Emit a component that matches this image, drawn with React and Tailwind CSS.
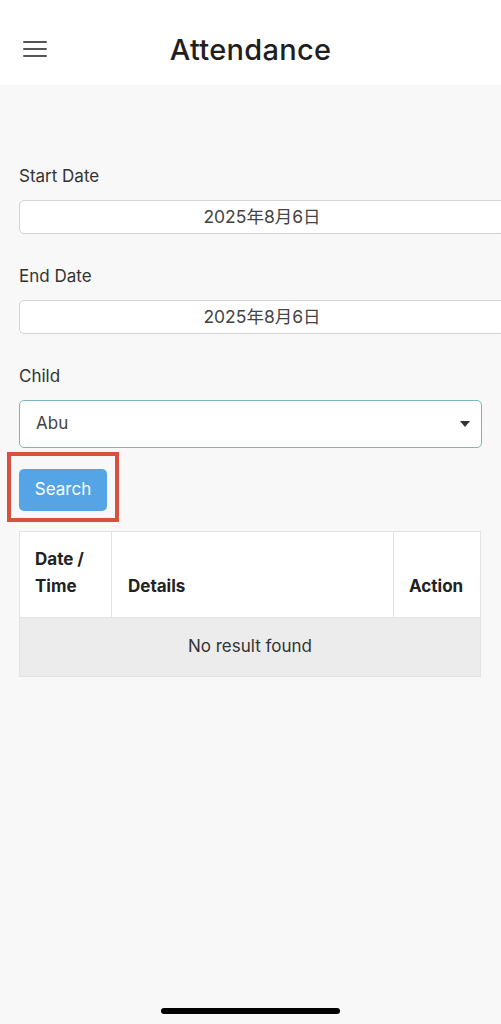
import React from 'react';

const font = { fontFamily: 'Inter, "Noto Sans CJK JP", sans-serif' };

const DateField = ({ label, value }) => (
  <div>
    <div className="text-[17px] leading-none text-[#333] h-[32px]">{label}</div>
    <div className="h-[34px] -mr-[23px] bg-white border border-[#d4d4d4] rounded-[5px] flex items-center justify-center text-[17.5px] text-[#444]">
      {value}
    </div>
  </div>
);

export default function App() {
  return (
    <div className="w-[501px] h-[1024px] bg-[#f8f8f8] relative overflow-hidden" style={font}>
      {/* header */}
      <div className="h-[85px] bg-white flex items-center relative">
        <button className="ml-[23px] mt-[12px] flex flex-col gap-[5px]">
          <span className="block w-[24px] h-[2px] bg-[#555] rounded" />
          <span className="block w-[24px] h-[2px] bg-[#555] rounded" />
          <span className="block w-[24px] h-[2px] bg-[#555] rounded" />
        </button>
        <div className="absolute left-0 right-0 top-[35px] text-center text-[29px] leading-none font-medium text-[#1f1f1f] tracking-[0.3px]">
          Attendance
        </div>
      </div>

      <div className="pl-[19px] pr-[19px] pt-[83px]">
        <DateField label="Start Date" value="2025年8月6日" />
        <div className="h-[34px]" />
        <DateField label="End Date" value="2025年8月6日" />
        <div className="h-[34px]" />
        <div className="text-[17px] leading-none text-[#333] h-[32px]">Child</div>
        <div className="h-[48px] bg-white border border-[#7fb3bf] rounded-[5px] flex items-center justify-between pl-[16px] pr-[11px] text-[17px] text-[#444]">
          <span>Abu</span>
          <svg width="10" height="6" viewBox="0 0 10 6"><path d="M0 0h10L5 6z" fill="#333" /></svg>
        </div>

        {/* highlighted search button */}
        <div className="-ml-[12px] mt-[4px] w-[112px] h-[70px] border-[4px] border-[#d9503f] flex items-start pt-[13px] pl-[8px]">
          <button className="w-[88px] h-[42px] bg-[#55a5e6] rounded-[5px] text-white text-[17px]">Search</button>
        </div>

        <table className="mt-[9px] w-[462px] border-collapse text-[17px]">
          <thead>
            <tr className="h-[86px] bg-white">
              <th className="w-[92px] border border-[#e3e3e7] text-left align-bottom font-bold text-[#222] pl-[15px] pr-[4px] pb-[17px] leading-[27px]">
                Date /<br />Time
              </th>
              <th className="border border-[#e3e3e7] text-left align-bottom font-bold text-[#222] pl-[16px] pb-[17px] leading-[27px]">Details</th>
              <th className="w-[87px] border border-[#e3e3e7] text-left align-bottom font-bold text-[#222] pl-[15px] pb-[17px] leading-[27px]">Action</th>
            </tr>
          </thead>
          <tbody>
            <tr className="h-[59px] bg-[#ececec]">
              <td colSpan={3} className="border border-[#e3e3e7] text-center text-[#333]">No result found</td>
            </tr>
          </tbody>
        </table>
      </div>

      <div className="absolute left-[161px] bottom-[10px] w-[179px] h-[6px] rounded-full bg-black" />
    </div>
  );
}
